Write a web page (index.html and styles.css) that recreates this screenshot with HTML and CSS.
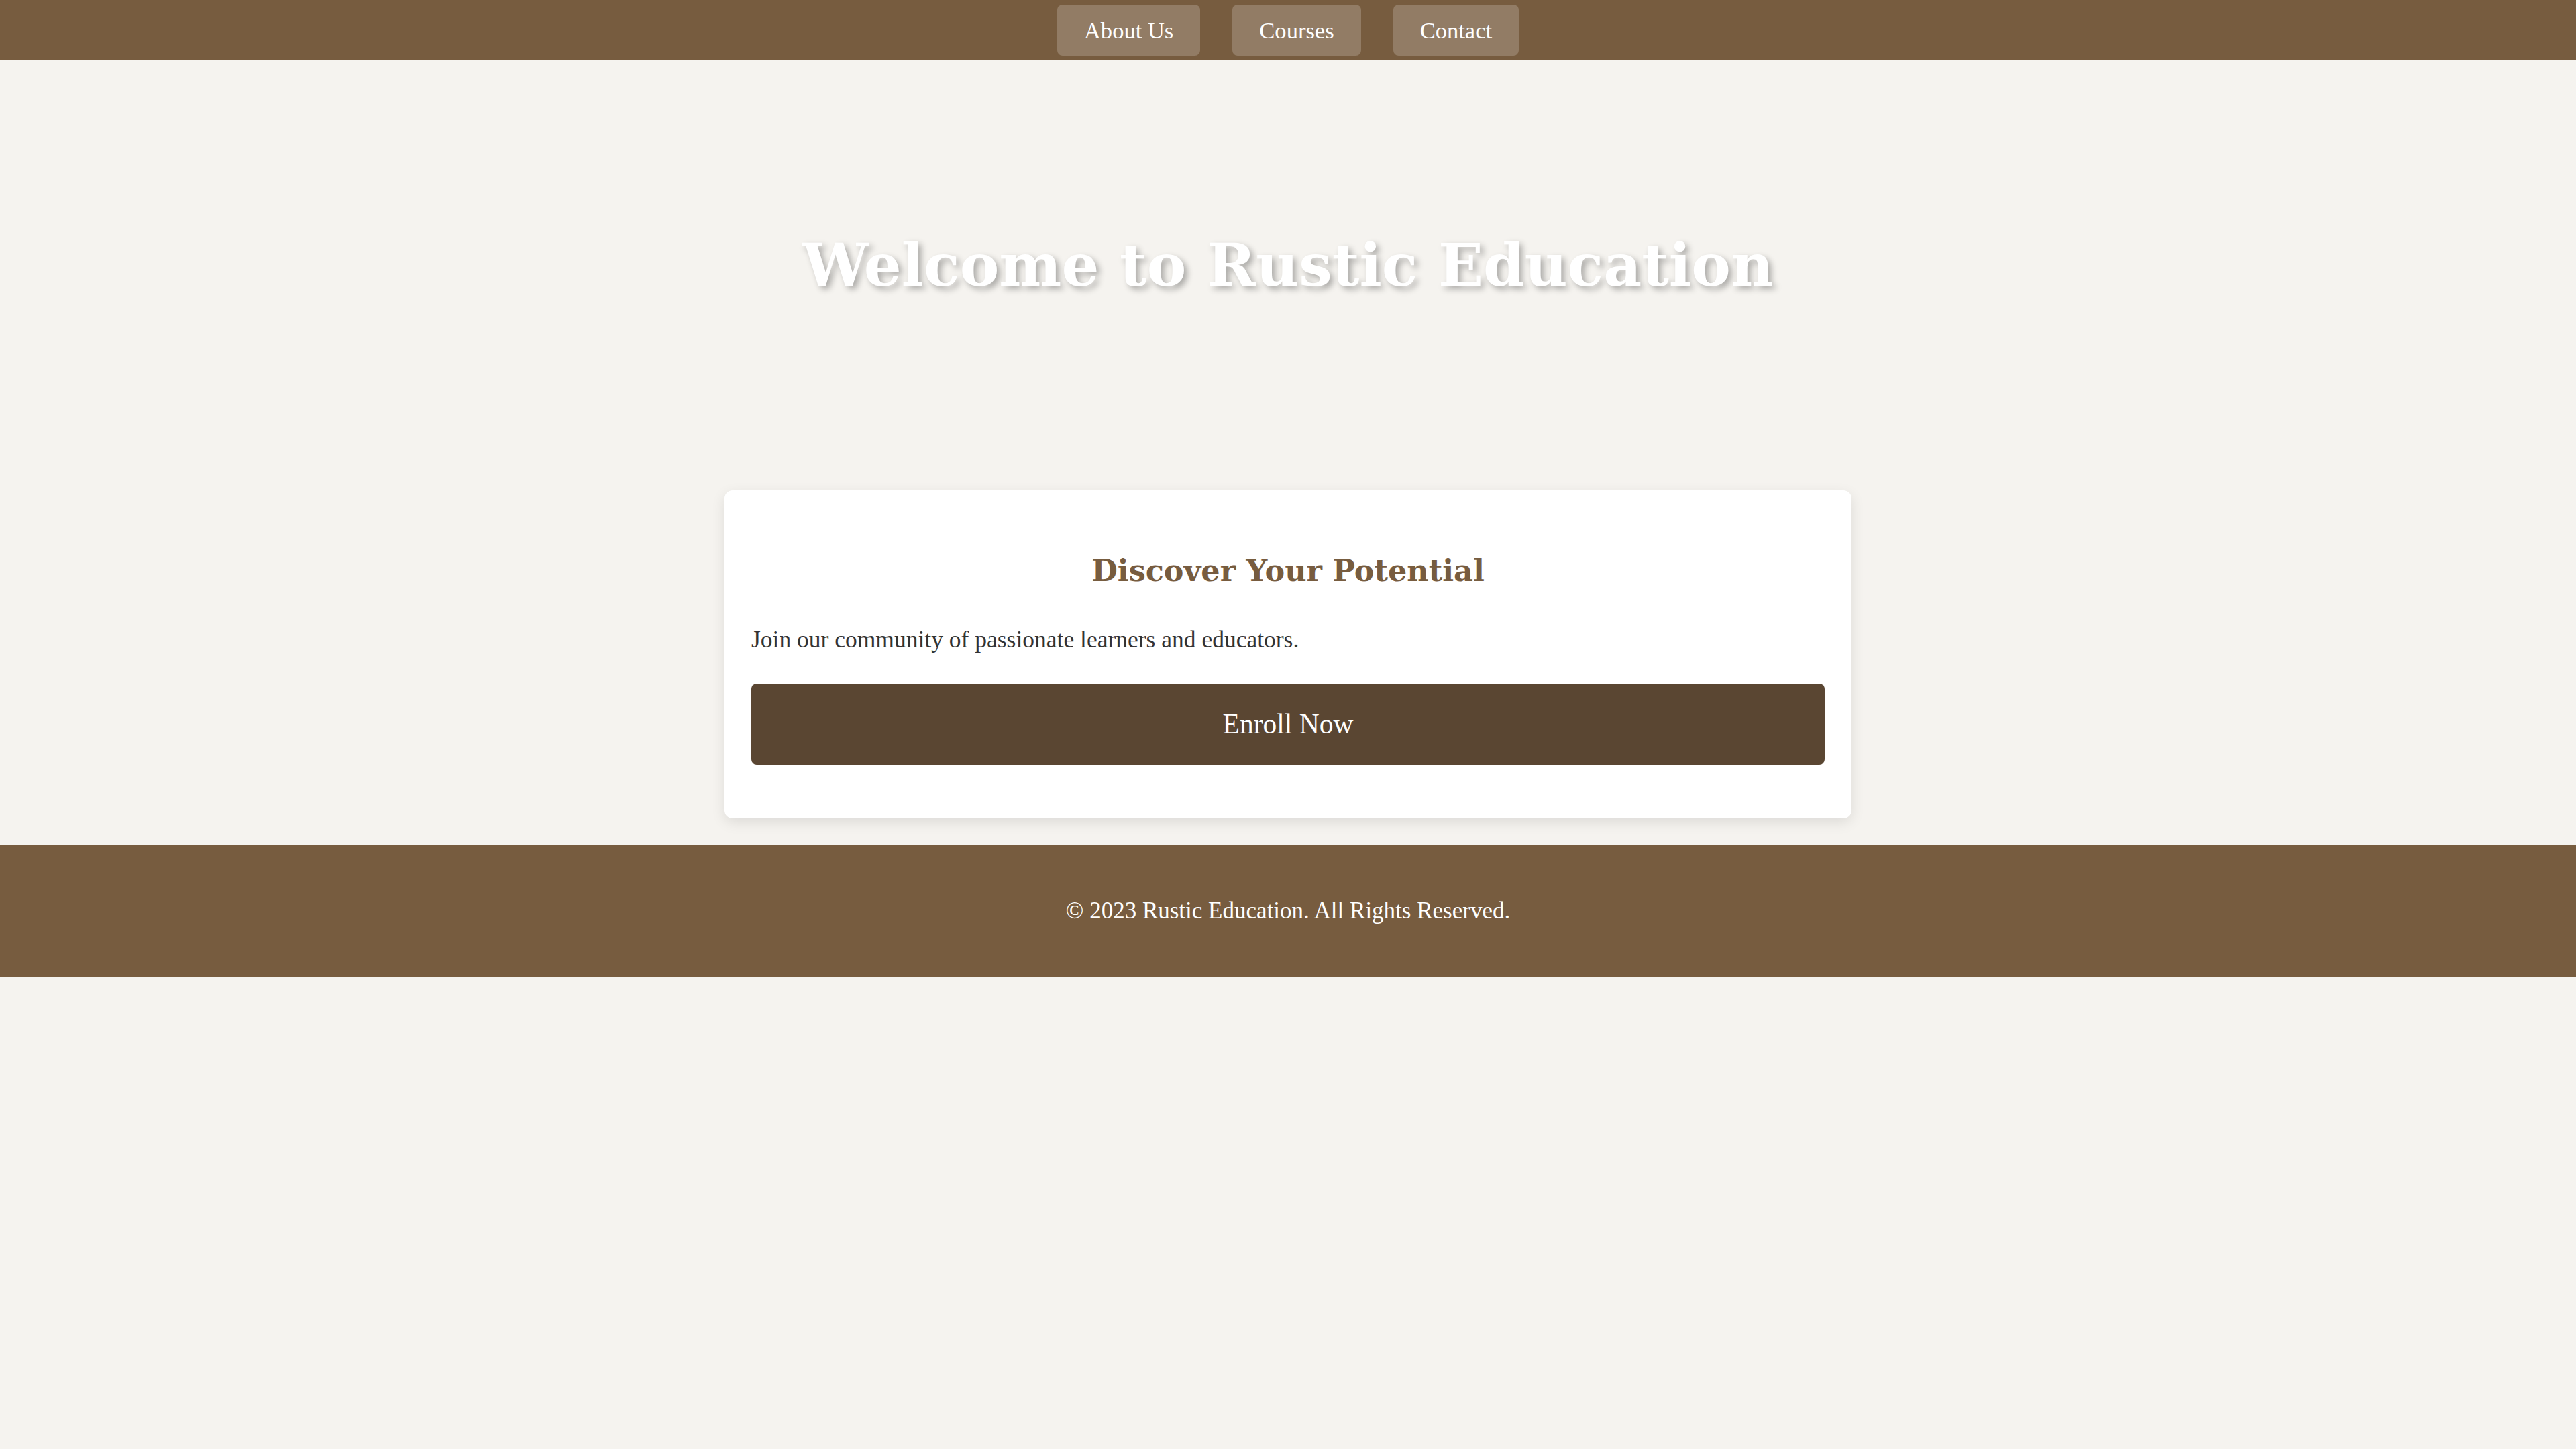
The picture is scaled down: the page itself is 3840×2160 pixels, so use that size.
FILE: index.html
```html
<!DOCTYPE html>
<html lang="en">
<head>
<meta charset="utf-8">
<title>Rustic Education</title>
<link rel="stylesheet" href="styles.css">
</head>
<body>
<nav class="topnav">
  <a class="nav-link" href="#">About Us</a>
  <a class="nav-link" href="#">Courses</a>
  <a class="nav-link" href="#">Contact</a>
</nav>
<header class="hero">
  <h1 class="hero-title">Welcome to Rustic Education</h1>
</header>
<main class="content">
  <section class="card">
    <h2 class="card-title">Discover Your Potential</h2>
    <p class="card-text">Join our community of passionate learners and educators.</p>
    <button class="enroll">Enroll Now</button>
  </section>
</main>
<footer class="site-footer">
  <p class="footer-text">© 2023 Rustic Education. All Rights Reserved.</p>
</footer>
</body>
</html>
```

FILE: styles.css
```css
* { box-sizing: border-box; }

html, body {
  margin: 0;
  padding: 0;
}

body {
  background: #f5f3ef;
  font-family: "Liberation Serif", "Times New Roman", serif;
  color: #333333;
  min-height: 2160px;
}

.topnav {
  height: 90px;
  background: #775c3f;
  display: flex;
  justify-content: center;
  align-items: center;
  gap: 48px;
}

.nav-link {
  display: block;
  padding: 19px 40px;
  line-height: 38px;
  font-size: 34.56px;
  color: #ffffff;
  text-decoration: none;
  background: rgba(255, 255, 255, 0.2);
  border-radius: 8px;
}

.hero {
  padding: 245px 20px 276px;
  text-align: center;
}

.hero-title {
  margin: 0;
  font-family: "DejaVu Serif", "Liberation Serif", serif;
  font-weight: bold;
  font-size: 88px;
  line-height: 120px;
  color: #ffffff;
  text-shadow: 5px 5px 10px rgba(0, 0, 0, 0.3);
}

.content {
  padding: 0 20px;
}

.card {
  width: 1680px;
  margin: 0 auto;
  padding: 40px;
  background: #ffffff;
  border-radius: 12px;
  box-shadow: 0 6px 20px rgba(0, 0, 0, 0.1);
}

.card-title {
  margin: 50px 0 0;
  font-family: "DejaVu Serif", "Liberation Serif", serif;
  font-weight: bold;
  font-size: 44.5px;
  line-height: 58px;
  color: #775c3f;
  text-align: center;
}

.card-text {
  margin: 48px 0 0;
  font-size: 35.5px;
  line-height: 52px;
  color: #333333;
}

.enroll {
  display: block;
  width: 100%;
  height: 121px;
  margin: 40px 0 40px;
  padding: 0;
  border: none;
  border-radius: 8px;
  background: #5a4632;
  color: #ffffff;
  font-family: "Liberation Serif", "Times New Roman", serif;
  font-size: 41.5px;
  line-height: 121px;
  cursor: pointer;
}

.site-footer {
  margin-top: 40px;
  background: #775c3f;
  padding: 72px 20px;
  text-align: center;
}

.footer-text {
  margin: 0;
  font-size: 35px;
  line-height: 52px;
  color: #ffffff;
}
```
